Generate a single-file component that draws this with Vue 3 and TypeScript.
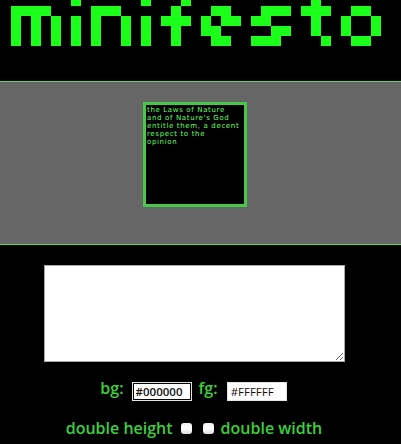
<script setup lang="ts">
const logoRows: [number, number, number][] = [
  // m
  [1, 0, 4], [1, 1, 1], [1, 2, 1], [1, 3, 1], [3, 1, 1], [3, 2, 1], [3, 3, 1], [5, 1, 1], [5, 2, 1], [5, 3, 1],
  // i
  [7, -1, 1], [7, 1, 1], [7, 2, 1], [7, 3, 1],
  // n
  [9, 0, 3], [9, 1, 1], [9, 2, 1], [9, 3, 1], [12, 1, 1], [12, 2, 1], [12, 3, 1],
  // i
  [14, -1, 1], [14, 1, 1], [14, 2, 1], [14, 3, 1],
  // f
  [18, -1, 1], [17, 0, 1], [16, 1, 3], [17, 2, 1], [17, 3, 1],
  // e
  [21, 0, 2], [20, 1, 1], [22, 1, 2], [20, 2, 2], [21, 3, 2],
  // s
  [26, 0, 3], [25, 1, 2], [27, 2, 2], [25, 3, 3],
  // t
  [31, -1, 1], [30, 0, 3], [31, 1, 1], [31, 2, 1], [32, 3, 1],
  // o
  [35, 0, 2], [34, 1, 1], [34, 2, 1], [37, 1, 1], [37, 2, 1], [35, 3, 2],
]

const previewLines = [
  'the Laws of Nature',
  "and of Nature's God",
  'entitle them, a decent',
  'respect to the',
  'opinion',
]
</script>

<template>
  <div class="page">
    <header class="masthead">
      <svg class="logo" width="401" height="81" viewBox="0 0 401 81" role="img" aria-label="minifesto">
        <rect
          v-for="(cell, index) in logoRows"
          :key="index"
          :x="cell[0] * 10 + 1"
          :y="cell[1] * 10 + 6"
          :width="cell[2] * 10"
          height="10"
        />
      </svg>
    </header>

    <section class="stage">
      <div class="poster">
        <p v-for="line in previewLines" :key="line" class="poster-line">{{ line }}</p>
      </div>
    </section>

    <form class="controls" @submit.prevent>
      <textarea class="message"></textarea>

      <div class="row colours">
        <label class="field" for="bg">bg:</label>
        <input id="bg" class="colour colour-active" type="text" value="#000000" />
        <label class="field" for="fg">fg:</label>
        <input id="fg" class="colour colour-plain" type="text" value="#FFFFFF" />
      </div>

      <div class="row toggles">
        <label for="dh">double height</label>
        <input id="dh" class="check" type="checkbox" />
        <input id="dw" class="check" type="checkbox" />
        <label for="dw">double width</label>
      </div>
    </form>
  </div>
</template>

<style>
html,
body {
  margin: 0;
  background: #000;
}
</style>

<style scoped>
.page {
  width: 401px;
  height: 444px;
  overflow: hidden;
  background: #000;
  font-family: "Open Sans", "DejaVu Sans", sans-serif;
}

.masthead {
  height: 81px;
  overflow: hidden;
}

.logo {
  display: block;
  fill: #1bff1b;
  shape-rendering: crispEdges;
}

.stage {
  box-sizing: border-box;
  height: 164px;
  display: flex;
  justify-content: center;
  padding: 20px 11px 0 0;
  background: #666;
  border-top: 1px solid #5fd35f;
  border-bottom: 1px solid #5fd35f;
}

.poster {
  box-sizing: border-box;
  width: 104px;
  height: 105px;
  padding: 1px 0 0 1px;
  background: #000;
  border: 3px solid #48c848;
  color: #66ff66;
  font-family: "DejaVu Sans", sans-serif;
  font-size: 7px;
  letter-spacing: 0.65px;
  line-height: 8px;
}

.poster-line {
  margin: 0;
  white-space: nowrap;
}

.controls {
  display: flex;
  flex-direction: column;
  align-items: center;
  padding: 20px 11px 0 0;
  color: #3bd03b;
  font-size: 16px;
  font-weight: 600;
}

.message {
  box-sizing: border-box;
  display: block;
  width: 301px;
  height: 97px;
  margin: 0 0 0 -1px;
  padding: 2px;
  background: #fff;
  border: 1px solid #a9a9a9;
  border-radius: 0;
  outline: none;
}

.row {
  display: flex;
  align-items: center;
}

.colours {
  gap: 7px;
  height: 20px;
  margin: 19px 3px 0 0;
}

.field {
  position: relative;
  top: -3px;
}

.colour {
  box-sizing: border-box;
  width: 60px;
  height: 19px;
  margin: 0 0 0 1px;
  padding: 0 0 0 3px;
  background: #fff;
  border: 1px solid #e4e4e4;
  border-radius: 0;
  color: #111;
  font-family: "Open Sans", sans-serif;
  font-size: 11.5px;
  font-weight: 400;
  outline: none;
}

.colour-active {
  box-shadow: inset 0 0 0 1px #000;
  font-weight: 600;
}

.colour-plain {
  margin-left: 2px;
}

.toggles {
  gap: 7px;
  height: 22px;
  margin: 16px 2px 0 0;
}

.check {
  appearance: none;
  width: 11px;
  height: 11px;
  margin: 0 0 0 1px;
  background: linear-gradient(#f2f2f2, #fff 50%, #dcdcdc);
  border-radius: 3px;
}

.check + .check {
  margin-left: 4px;
}

.toggles label {
  white-space: nowrap;
}
</style>
